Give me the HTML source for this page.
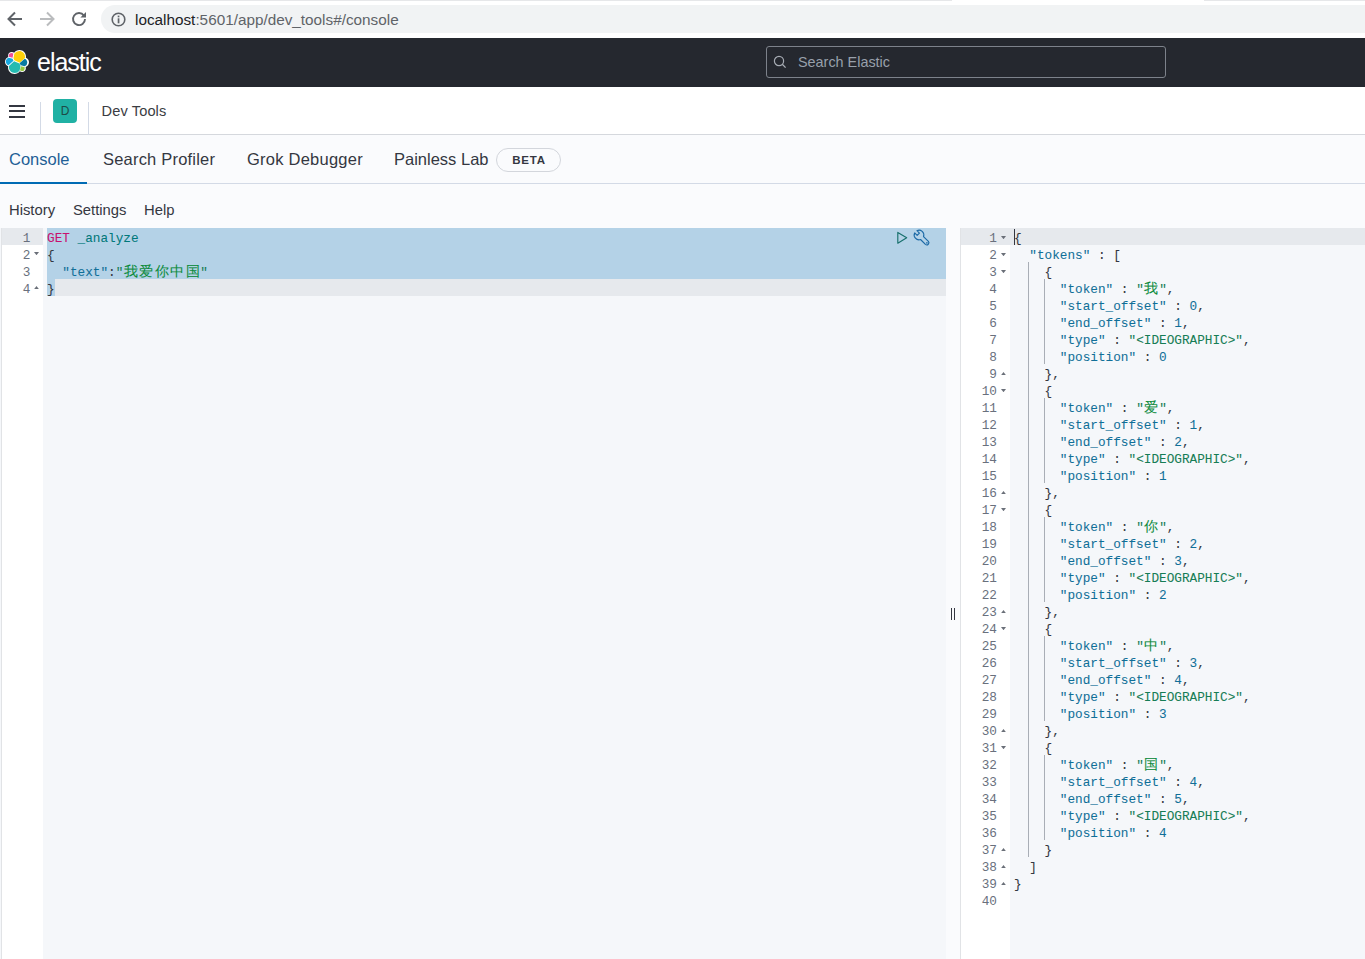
<!DOCTYPE html>
<html><head><meta charset="utf-8"><title>Dev Tools - Kibana</title>
<style>
*{margin:0;padding:0;box-sizing:border-box}
html,body{width:1365px;height:959px;overflow:hidden;background:#fff;position:relative;font-family:"Liberation Sans",sans-serif}
.a{position:absolute}
#chrome{left:0;top:0;width:1365px;height:38px;background:#fff}
#pill{left:101px;top:5px;width:1290px;height:28px;border-radius:14px;background:#f1f3f4}
#url{left:135px;top:9.5px;font-size:15.3px;line-height:20px;color:#5f6368;white-space:pre}
#url b{font-weight:normal;color:#202124}
#hdr{left:0;top:38px;width:1365px;height:49px;background:#25282f}
#elastic{left:37px;top:47.3px;font-size:25px;line-height:30px;color:#fff;letter-spacing:-1.02px}
#search{left:766px;top:46px;width:400px;height:32px;border:1px solid #7d828b;border-radius:3px}
#stext{left:798px;top:53px;font-size:14.4px;line-height:18px;color:#98a0ab}
#nav{left:0;top:87px;width:1365px;height:48px;background:#fff;border-bottom:1px solid #d5d8dd;box-shadow:0 1px 4px rgba(0,0,0,0.09)}
.hb{left:9px;width:16px;height:2px;background:#343741}
.vd{top:102px;width:1px;height:33px;background:#d3dae6}
#av{left:53px;top:99px;width:24px;height:24px;border-radius:4px;background:#20b1a4;color:#1d4a47;font-size:12px;line-height:24px;text-align:center}
#devtools{left:101.5px;top:102px;font-size:14.6px;line-height:18px;color:#3a3c42;letter-spacing:0.12px}
#tabs{left:0;top:135px;width:1365px;height:49px;background:#fafbfd;border-bottom:1px solid #d3dae6}
.tab{top:149px;font-size:16.5px;line-height:20px;color:#343741;white-space:pre}
#ul{left:0;top:182px;width:87px;height:2px;background:#006bb4}
#beta{left:496px;top:148px;width:65px;height:24px;border:1px solid #d3d6dc;border-radius:12px;font-size:11.5px;font-weight:bold;color:#343741;text-align:center;line-height:22.5px;letter-spacing:0.8px;padding-left:1px}
#sub{left:0;top:184px;width:1365px;height:44px;background:#fafbfd}
.sl{top:201px;font-size:14.8px;line-height:18px;color:#343741}
#lp{left:0;top:228px;width:946px;height:731px;background:#f5f7fa}
#lg{left:1px;top:228px;width:42px;height:731px;background:#fff;border-left:1px solid #e1e3e6}
#dv{left:946px;top:228px;width:14px;height:731px;background:#fafbfd}
#rg{left:960px;top:228px;width:50px;height:731px;background:#fff;border-left:1px solid #e1e3e6}
#rp{left:1010px;top:228px;width:355px;height:731px;background:#f5f7fa}
.gn{position:absolute;height:17px;line-height:17px;padding-top:2px;text-align:right;font-family:"Liberation Mono",monospace;font-size:12.73px;color:#69707d}
.fd{position:absolute;width:5px;height:3.2px;background:#6a6f78;clip-path:polygon(0 0,100% 0,50% 100%)}
.fu{position:absolute;width:5px;height:3.2px;background:#6a6f78;clip-path:polygon(50% 0,100% 100%,0 100%)}
.ln{position:absolute;left:0;height:17px;line-height:17px;padding-top:2px;white-space:pre;font-family:"Liberation Mono",monospace;font-size:12.73px;color:#343741;-webkit-text-stroke:0.06px currentColor}
.k{color:#106f98}.s{color:#167d55}.n{color:#106f98}.m{color:#c8116f}.u{color:#00787a}
.cj{display:inline-block;width:15.4px;text-align:center;font-size:14px;line-height:17px;vertical-align:top;color:#0a8a3a}
.ig{position:absolute;width:1px;background:#a9aeb6}
</style></head>
<body>
<div class="a" id="chrome"></div>
<div class="a" id="pill"></div>
<div class="a" style="left:0;top:0;width:952px;height:1px;background:#e6e7e9"></div>
<div class="a" style="left:1204px;top:0;width:161px;height:1px;background:#e6e7e9"></div>
<svg class="a" style="left:0;top:0" width="100" height="38" viewBox="0 0 100 38">
  <g fill="none" stroke="#5f6368" stroke-width="2">
    <path d="M22 19 H9 M15 12.5 L8.5 19 L15 25.5"/>
  </g>
  <g fill="none" stroke="#babcbe" stroke-width="2">
    <path d="M40 19 H53 M47 12.5 L53.5 19 L47 25.5"/>
  </g>
  <path d="M83.9 15.6 A6 6 0 1 0 85 19" fill="none" stroke="#5f6368" stroke-width="1.9"/>
  <path d="M86 12 V17.6 H80.4 Z" fill="#5f6368"/>
</svg>
<svg class="a" style="left:110px;top:11px" width="17" height="17" viewBox="0 0 17 17">
  <circle cx="8.5" cy="8.5" r="6.3" fill="none" stroke="#5f6368" stroke-width="1.6"/>
  <rect x="7.7" y="7.3" width="1.7" height="5" fill="#5f6368"/>
  <rect x="7.7" y="4.6" width="1.7" height="1.7" fill="#5f6368"/>
</svg>
<div class="a" id="url"><b>localhost</b>:5601/app/dev_tools#/console</div>

<div class="a" id="hdr"></div>
<svg class="a" style="left:5px;top:50px" width="24" height="24" viewBox="0 0 32 32"><g fill="none" fill-rule="evenodd"><path fill="#FFF" d="M32 16.357c0-2.679-1.665-5.03-4.167-5.937.109-.565.16-1.134.16-1.729C27.993 3.897 24.094 0 19.293 0c-2.8 0-5.413 1.338-7.044 3.588a4.986 4.986 0 00-3.089-1.072 5.004 5.004 0 00-5.008 5.004c0 .597.107 1.188.3 1.739C1.952 10.152.001 12.770.001 15.6c0 2.697 1.672 5.047 4.175 5.946a9.615 9.615 0 00-.161 1.729c0 4.784 3.890 8.662 8.676 8.662 2.813 0 5.416-1.348 7.036-3.598a4.950 4.950 0 003.079 1.082c2.754 0 5.005-2.246 5.005-5.004 0-.607-.107-1.188-.3-1.737C30.040 21.805 32 19.186 32 16.357"/><path fill="#FED10A" d="M12.580 13.790l7.002 3.193 7.067-6.190a7.820 7.820 0 00.155-1.558c0-4.318-3.512-7.830-7.830-7.830a7.813 7.813 0 00-6.464 3.419l-1.173 6.092 1.243 2.874"/><path fill="#24BBB1" d="M5.333 21.180a7.880 7.880 0 00-.16 1.580c0 4.334 3.524 7.859 7.860 7.859a7.892 7.892 0 006.511-3.444l1.166-6.075-1.555-2.976-7.030-3.204-6.792 6.260"/><path fill="#EF5098" d="M5.290 9.132l4.800 1.133L11.140 4.810a3.765 3.765 0 00-2.247-.753 3.790 3.790 0 00-3.789 3.790c0 .442.070.870.186 1.285"/><path fill="#17A8E0" d="M4.875 10.283C2.730 10.993 1.128 13.050 1.128 15.330c0 2.218 1.372 4.198 3.434 4.978l6.733-6.085-1.236-2.641-5.184-1.299"/><path fill="#93C83E" d="M20.048 27.155c.681.524 1.509.813 2.353.813a3.790 3.790 0 003.788-3.788c0-.490-.070-.956-.186-1.374l-4.795-1.121-1.160 5.470"/><path fill="#0779A1" d="M21.022 20.418l5.276 1.233a5.338 5.338 0 003.435-4.981c0-2.208-1.376-4.190-3.440-4.970l-6.902 6.045 1.630 2.673"/></g></svg>
<div class="a" id="elastic">elastic</div>
<div class="a" id="search"></div>
<svg class="a" style="left:773px;top:55px" width="14" height="14" viewBox="0 0 14 14">
  <circle cx="6" cy="6" r="4.6" fill="none" stroke="#a7acb4" stroke-width="1.2"/>
  <path d="M9.3 9.3 L12.6 12.6" stroke="#a7acb4" stroke-width="1.3"/>
</svg>
<div class="a" id="stext">Search Elastic</div>

<div class="a" id="nav"></div>
<div class="a hb" style="top:104.5px"></div>
<div class="a hb" style="top:110px"></div>
<div class="a hb" style="top:115.5px"></div>
<div class="a vd" style="left:40px"></div>
<div class="a vd" style="left:88px"></div>
<div class="a" id="av">D</div>
<div class="a" id="devtools">Dev Tools</div>

<div class="a" id="tabs"></div>
<div class="a tab" style="left:9px;color:#1f5f96">Console</div>
<div class="a tab" style="left:103px;letter-spacing:0.2px">Search Profiler</div>
<div class="a tab" style="left:247px;letter-spacing:0.24px">Grok Debugger</div>
<div class="a tab" style="left:394px">Painless Lab</div>
<div class="a" id="beta">BETA</div>
<div class="a" id="ul"></div>

<div class="a" id="sub"></div>
<div class="a sl" style="left:9px">History</div>
<div class="a sl" style="left:73px">Settings</div>
<div class="a sl" style="left:144px">Help</div>

<div class="a" id="lp"></div>
<div class="a" id="lg"></div>
<!-- left active line gutter -->
<div class="a" style="left:2px;top:228px;width:41px;height:17px;background:#e6e9ed"></div>
<!-- left active line -->
<div class="a" style="left:47px;top:279px;width:899px;height:17px;background:#e6e9ed"></div>
<!-- selection -->
<div class="a" style="left:47px;top:228px;width:899px;height:51px;background:#b4d2e7"></div>
<div class="a" style="left:47px;top:279px;width:7.64px;height:17px;background:#b4d2e7"></div>
<div class="a" style="left:0;top:0;width:0;height:0">
<div class="gn" style="top:228px;left:0;width:30.3px">1</div>
<div class="gn" style="top:245px;left:0;width:30.3px">2</div>
<div class="fd" style="top:252px;left:34px"></div>
<div class="gn" style="top:262px;left:0;width:30.3px">3</div>
<div class="gn" style="top:279px;left:0;width:30.3px">4</div>
<div class="fu" style="top:286px;left:34px"></div>
</div>
<div class="a" style="left:47px;top:0;width:899px;height:959px">
<div class="ln" style="top:228px"><span class="m">GET</span> <span class="u">_analyze</span></div>
<div class="ln" style="top:245px">{</div>
<div class="ln" style="top:262px">  <span class="k">"text"</span>:<span class="s">"<span class="cj">我</span><span class="cj">爱</span><span class="cj">你</span><span class="cj">中</span><span class="cj">国</span>"</span></div>
<div class="ln" style="top:279px">}</div>
</div>
<svg class="a" style="left:890px;top:226px" width="46" height="24" viewBox="0 0 46 24">
  <path d="M7.8 6.4 L16.7 11.8 L7.8 17.2 Z" fill="none" stroke="#17706c" stroke-width="1.15" stroke-linejoin="round"/>
  <path d="M33.53 10.57 L38.38 15.42 A2.1 2.1 0 0 1 35.42 18.38 L30.57 13.53 A4.8 4.8 0 0 1 24.67 6.93 L27.16 9.42 L29.42 7.16 L26.93 4.67 A4.8 4.8 0 0 1 33.53 10.57 Z" fill="none" stroke="#1b69a6" stroke-width="1.15" stroke-linejoin="round"/>
  <circle cx="36.9" cy="16.9" r="0.8" fill="#1b69a6"/>
</svg>

<div class="a" id="dv"></div>
<div class="a" style="left:951px;top:608px;width:1px;height:12px;background:#343741"></div>
<div class="a" style="left:954px;top:608px;width:1px;height:12px;background:#343741"></div>

<div class="a" id="rg"></div>
<div class="a" id="rp"></div>
<div class="a" style="left:961px;top:228px;width:404px;height:17px;background:#e6e9ed"></div>
<div class="a" style="left:960px;top:0;width:0;height:0">
<div class="gn" style="top:228px;left:0;width:37px">1</div>
<div class="fd" style="top:236px;left:41px"></div>
<div class="gn" style="top:245px;left:0;width:37px">2</div>
<div class="fd" style="top:253px;left:41px"></div>
<div class="gn" style="top:262px;left:0;width:37px">3</div>
<div class="fd" style="top:270px;left:41px"></div>
<div class="gn" style="top:279px;left:0;width:37px">4</div>
<div class="gn" style="top:296px;left:0;width:37px">5</div>
<div class="gn" style="top:313px;left:0;width:37px">6</div>
<div class="gn" style="top:330px;left:0;width:37px">7</div>
<div class="gn" style="top:347px;left:0;width:37px">8</div>
<div class="gn" style="top:364px;left:0;width:37px">9</div>
<div class="fu" style="top:372px;left:41px"></div>
<div class="gn" style="top:381px;left:0;width:37px">10</div>
<div class="fd" style="top:389px;left:41px"></div>
<div class="gn" style="top:398px;left:0;width:37px">11</div>
<div class="gn" style="top:415px;left:0;width:37px">12</div>
<div class="gn" style="top:432px;left:0;width:37px">13</div>
<div class="gn" style="top:449px;left:0;width:37px">14</div>
<div class="gn" style="top:466px;left:0;width:37px">15</div>
<div class="gn" style="top:483px;left:0;width:37px">16</div>
<div class="fu" style="top:491px;left:41px"></div>
<div class="gn" style="top:500px;left:0;width:37px">17</div>
<div class="fd" style="top:508px;left:41px"></div>
<div class="gn" style="top:517px;left:0;width:37px">18</div>
<div class="gn" style="top:534px;left:0;width:37px">19</div>
<div class="gn" style="top:551px;left:0;width:37px">20</div>
<div class="gn" style="top:568px;left:0;width:37px">21</div>
<div class="gn" style="top:585px;left:0;width:37px">22</div>
<div class="gn" style="top:602px;left:0;width:37px">23</div>
<div class="fu" style="top:610px;left:41px"></div>
<div class="gn" style="top:619px;left:0;width:37px">24</div>
<div class="fd" style="top:627px;left:41px"></div>
<div class="gn" style="top:636px;left:0;width:37px">25</div>
<div class="gn" style="top:653px;left:0;width:37px">26</div>
<div class="gn" style="top:670px;left:0;width:37px">27</div>
<div class="gn" style="top:687px;left:0;width:37px">28</div>
<div class="gn" style="top:704px;left:0;width:37px">29</div>
<div class="gn" style="top:721px;left:0;width:37px">30</div>
<div class="fu" style="top:729px;left:41px"></div>
<div class="gn" style="top:738px;left:0;width:37px">31</div>
<div class="fd" style="top:746px;left:41px"></div>
<div class="gn" style="top:755px;left:0;width:37px">32</div>
<div class="gn" style="top:772px;left:0;width:37px">33</div>
<div class="gn" style="top:789px;left:0;width:37px">34</div>
<div class="gn" style="top:806px;left:0;width:37px">35</div>
<div class="gn" style="top:823px;left:0;width:37px">36</div>
<div class="gn" style="top:840px;left:0;width:37px">37</div>
<div class="fu" style="top:848px;left:41px"></div>
<div class="gn" style="top:857px;left:0;width:37px">38</div>
<div class="fu" style="top:865px;left:41px"></div>
<div class="gn" style="top:874px;left:0;width:37px">39</div>
<div class="fu" style="top:882px;left:41px"></div>
<div class="gn" style="top:891px;left:0;width:37px">40</div>
</div>
<div class="ig" style="left:1028px;top:262px;height:595px"></div><div class="ig" style="left:1044px;top:279px;height:85px"></div><div class="ig" style="left:1044px;top:398px;height:85px"></div><div class="ig" style="left:1044px;top:517px;height:85px"></div><div class="ig" style="left:1044px;top:636px;height:85px"></div><div class="ig" style="left:1044px;top:755px;height:85px"></div>
<div class="a" style="left:1014px;top:229px;width:1px;height:16px;background:#343741"></div>
<div class="a" style="left:1014px;top:0;width:351px;height:959px;overflow:hidden">
<div class="ln" style="top:228px">{</div>
<div class="ln" style="top:245px">  <span class="k">&quot;tokens&quot;</span> : [</div>
<div class="ln" style="top:262px">    {</div>
<div class="ln" style="top:279px">      <span class="k">&quot;token&quot;</span> : <span class="s">&quot;<span class="cj">我</span>&quot;</span>,</div>
<div class="ln" style="top:296px">      <span class="k">&quot;start_offset&quot;</span> : <span class="n">0</span>,</div>
<div class="ln" style="top:313px">      <span class="k">&quot;end_offset&quot;</span> : <span class="n">1</span>,</div>
<div class="ln" style="top:330px">      <span class="k">&quot;type&quot;</span> : <span class="s">&quot;&lt;IDEOGRAPHIC&gt;&quot;</span>,</div>
<div class="ln" style="top:347px">      <span class="k">&quot;position&quot;</span> : <span class="n">0</span></div>
<div class="ln" style="top:364px">    },</div>
<div class="ln" style="top:381px">    {</div>
<div class="ln" style="top:398px">      <span class="k">&quot;token&quot;</span> : <span class="s">&quot;<span class="cj">爱</span>&quot;</span>,</div>
<div class="ln" style="top:415px">      <span class="k">&quot;start_offset&quot;</span> : <span class="n">1</span>,</div>
<div class="ln" style="top:432px">      <span class="k">&quot;end_offset&quot;</span> : <span class="n">2</span>,</div>
<div class="ln" style="top:449px">      <span class="k">&quot;type&quot;</span> : <span class="s">&quot;&lt;IDEOGRAPHIC&gt;&quot;</span>,</div>
<div class="ln" style="top:466px">      <span class="k">&quot;position&quot;</span> : <span class="n">1</span></div>
<div class="ln" style="top:483px">    },</div>
<div class="ln" style="top:500px">    {</div>
<div class="ln" style="top:517px">      <span class="k">&quot;token&quot;</span> : <span class="s">&quot;<span class="cj">你</span>&quot;</span>,</div>
<div class="ln" style="top:534px">      <span class="k">&quot;start_offset&quot;</span> : <span class="n">2</span>,</div>
<div class="ln" style="top:551px">      <span class="k">&quot;end_offset&quot;</span> : <span class="n">3</span>,</div>
<div class="ln" style="top:568px">      <span class="k">&quot;type&quot;</span> : <span class="s">&quot;&lt;IDEOGRAPHIC&gt;&quot;</span>,</div>
<div class="ln" style="top:585px">      <span class="k">&quot;position&quot;</span> : <span class="n">2</span></div>
<div class="ln" style="top:602px">    },</div>
<div class="ln" style="top:619px">    {</div>
<div class="ln" style="top:636px">      <span class="k">&quot;token&quot;</span> : <span class="s">&quot;<span class="cj">中</span>&quot;</span>,</div>
<div class="ln" style="top:653px">      <span class="k">&quot;start_offset&quot;</span> : <span class="n">3</span>,</div>
<div class="ln" style="top:670px">      <span class="k">&quot;end_offset&quot;</span> : <span class="n">4</span>,</div>
<div class="ln" style="top:687px">      <span class="k">&quot;type&quot;</span> : <span class="s">&quot;&lt;IDEOGRAPHIC&gt;&quot;</span>,</div>
<div class="ln" style="top:704px">      <span class="k">&quot;position&quot;</span> : <span class="n">3</span></div>
<div class="ln" style="top:721px">    },</div>
<div class="ln" style="top:738px">    {</div>
<div class="ln" style="top:755px">      <span class="k">&quot;token&quot;</span> : <span class="s">&quot;<span class="cj">国</span>&quot;</span>,</div>
<div class="ln" style="top:772px">      <span class="k">&quot;start_offset&quot;</span> : <span class="n">4</span>,</div>
<div class="ln" style="top:789px">      <span class="k">&quot;end_offset&quot;</span> : <span class="n">5</span>,</div>
<div class="ln" style="top:806px">      <span class="k">&quot;type&quot;</span> : <span class="s">&quot;&lt;IDEOGRAPHIC&gt;&quot;</span>,</div>
<div class="ln" style="top:823px">      <span class="k">&quot;position&quot;</span> : <span class="n">4</span></div>
<div class="ln" style="top:840px">    }</div>
<div class="ln" style="top:857px">  ]</div>
<div class="ln" style="top:874px">}</div>
<div class="ln" style="top:891px"></div>
</div>
</body></html>
